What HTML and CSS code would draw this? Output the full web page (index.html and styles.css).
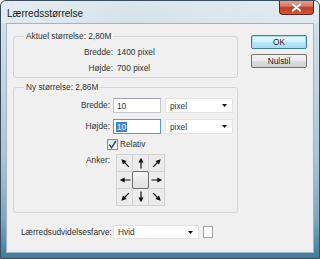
FILE: index.html
```html
<!DOCTYPE html>
<html lang="da">
<head>
  <meta charset="UTF-8" />
  <title>Lærredsstørrelse</title>
  <link rel="stylesheet" href="styles.css">
</head>
<body>

  <div class="window">
    <div class="titlebar">
      <span class="title">Lærredsstørrelse</span>
      <span class="close">
        <svg width="11" height="9" viewBox="0 0 11 9"><path d="M2 1.5L9 7.5M9 1.5L2 7.5" stroke="#fff" stroke-width="2.2" stroke-linecap="round"/></svg>
      </span>
    </div>

    <div class="client">
      <div class="main">
        <div class="groups">
          <fieldset class="group current">
            <legend>Aktuel størrelse: 2,80M</legend>
            <div class="info-row"><span class="lbl">Bredde:</span><span>1400 pixel</span></div>
            <div class="info-row"><span class="lbl">Højde:</span><span>700 pixel</span></div>
          </fieldset>

          <fieldset class="group new">
            <legend>Ny størrelse: 2,86M</legend>
            <div class="field-row">
              <span class="lbl">Bredde:</span>
              <span class="input">10</span>
              <span class="select">pixel <svg class="caret" width="5" height="3" viewBox="0 0 5 3"><path d="M0 0H5L2.5 3Z"/></svg></span>
            </div>
            <div class="field-row">
              <span class="lbl">Højde:</span>
              <span class="input focus"><span class="sel-text">10</span></span>
              <span class="select">pixel <svg class="caret" width="5" height="3" viewBox="0 0 5 3"><path d="M0 0H5L2.5 3Z"/></svg></span>
            </div>
            <div class="check-row">
              <span class="checkbox">
                <svg width="9" height="9" viewBox="0 0 9 9"><path d="M1.3 4.6L3.6 7.6L8 0.8" fill="none" stroke="#2a4a86" stroke-width="1.5"/></svg>
              </span>
              <span>Relativ</span>
            </div>
            <div class="anchor-row">
              <span class="lbl">Anker:</span>
              <div class="anchor-grid">
                <span class="cell"><svg class="arr nw" viewBox="0 0 12 12"><path d="M6 0.8L8.6 5.6H3.4Z"/><path d="M6 5V11.5" class="shaft"/></svg></span>
                <span class="cell"><svg class="arr n" viewBox="0 0 12 12"><path d="M6 0.8L8.6 5.6H3.4Z"/><path d="M6 5V11.5" class="shaft"/></svg></span>
                <span class="cell"><svg class="arr ne" viewBox="0 0 12 12"><path d="M6 0.8L8.6 5.6H3.4Z"/><path d="M6 5V11.5" class="shaft"/></svg></span>
                <span class="cell"><svg class="arr w" viewBox="0 0 12 12"><path d="M6 0.8L8.6 5.6H3.4Z"/><path d="M6 5V11.5" class="shaft"/></svg></span>
                <span class="cell center"></span>
                <span class="cell"><svg class="arr e" viewBox="0 0 12 12"><path d="M6 0.8L8.6 5.6H3.4Z"/><path d="M6 5V11.5" class="shaft"/></svg></span>
                <span class="cell"><svg class="arr sw" viewBox="0 0 12 12"><path d="M6 0.8L8.6 5.6H3.4Z"/><path d="M6 5V11.5" class="shaft"/></svg></span>
                <span class="cell"><svg class="arr s" viewBox="0 0 12 12"><path d="M6 0.8L8.6 5.6H3.4Z"/><path d="M6 5V11.5" class="shaft"/></svg></span>
                <span class="cell"><svg class="arr se" viewBox="0 0 12 12"><path d="M6 0.8L8.6 5.6H3.4Z"/><path d="M6 5V11.5" class="shaft"/></svg></span>
              </div>
            </div>
          </fieldset>
        </div>

        <div class="buttons">
          <span class="btn default">OK</span>
          <span class="btn">Nulstil</span>
        </div>
      </div>

      <div class="ext-row">
        <span class="ext-label">Lærredsudvidelsesfarve:</span>
        <span class="select wide">Hvid <svg class="caret" width="5" height="3" viewBox="0 0 5 3"><path d="M0 0H5L2.5 3Z"/></svg></span>
        <span class="swatch"></span>
      </div>
    </div>
  </div>

</body>
</html>
```

FILE: styles.css
```css
body {
  margin: 0;
  font-family: 'Liberation Sans', Arial, sans-serif;
  font-size: 8.3px;
  color: #333;
  background: #fff;
}

.window {
  width: 320px;
  height: 259px;
  box-sizing: border-box;
  border: 1px solid #3a4d5e;
  border-radius: 6px 6px 0 0;
  background: linear-gradient(to bottom, #d6e3ec 0%, #c6d8e4 25%, #abc5d6 60%, #7ea7c0 85%, #3e7b9c 100%);
  display: flex;
  flex-direction: column;
  overflow: hidden;
}

.titlebar {
  height: 22px;
  display: flex;
  justify-content: space-between;
  align-items: flex-start;
  padding-left: 6px;
  background: linear-gradient(to right, rgba(255,255,255,0.35), rgba(255,255,255,0.1) 40%, rgba(255,255,255,0.3));
}

.title {
  font-size: 10px;
  color: #1a1a1a;
  margin-top: 7px;
}

.close {
  width: 35px;
  height: 15px;
  margin-top: -1px;
  margin-right: 5px;
  box-sizing: border-box;
  border: 1px solid #6b1e12;
  border-top: none;
  border-radius: 0 0 4px 4px;
  background: linear-gradient(to bottom, #e9a796 0%, #d9745e 45%, #c3391f 55%, #d05a3c 100%);
  display: flex;
  align-items: center;
  justify-content: center;
}

.client {
  margin: 0 5px;
  height: 230px;
  box-sizing: border-box;
  border: 1px solid #9fb5c6;
  background: #f0f0f0;
  padding: 7px 6px 0 6px;
}

.main {
  display: flex;
}

.groups {
  width: 225px;
}

.group {
  margin: 0;
  min-width: 0;
  border: 1px solid #d5d5d5;
  border-radius: 3px;
}

.group legend {
  margin-left: 10px;
  padding: 0 2px;
  line-height: 11px;
}

.current {
  padding: 2px 0 1px 0;
}

.new {
  margin-top: 4px;
  padding: 5px 0 6px 0;
}

.info-row {
  display: grid;
  grid-template-columns: 99px auto;
  column-gap: 4px;
  height: 16px;
  align-items: center;
}

.lbl {
  text-align: right;
}

.field-row {
  display: grid;
  grid-template-columns: 96px 48px 69px;
  column-gap: 3px;
  height: 15px;
  align-items: stretch;
}

.field-row + .field-row {
  margin-top: 6px;
}

.field-row .lbl {
  line-height: 15px;
}

.field-row .select {
  margin-left: 1px;
}

.input {
  box-sizing: border-box;
  border: 1px solid #c3c6cc;
  border-top-color: #9ea2aa;
  background: #fff;
  padding-left: 3px;
  display: flex;
  align-items: center;
}

.input.focus {
  border-color: #5b9ad4;
}

.sel-text {
  background: #3a86d8;
  color: #fff;
  padding: 0 1px;
  line-height: 10px;
  margin-left: -1px;
}

.select {
  box-sizing: border-box;
  border: 1px solid #e3e3e3;
  background: #fff;
  padding: 0 5px 0 4px;
  display: flex;
  align-items: center;
  justify-content: space-between;
}

.caret {
  fill: #111;
}

.check-row {
  display: flex;
  align-items: center;
  height: 12px;
  margin-top: 4px;
  padding-left: 93px;
  gap: 2px;
}

.checkbox {
  width: 11px;
  height: 11px;
  box-sizing: border-box;
  border: 1px solid #8c8e91;
  background: linear-gradient(to bottom, #e2e3e5, #fafafa);
  display: flex;
  align-items: center;
  justify-content: center;
}

.anchor-row {
  display: flex;
  margin-top: 4px;
}

.anchor-row .lbl {
  width: 96px;
  margin-top: 1px;
}

.anchor-grid {
  margin-left: 6px;
  display: grid;
  grid-template-columns: repeat(3, 15px);
  grid-template-rows: repeat(3, 16px);
  gap: 1px;
  padding: 1px;
  background: #d2d2d2;
}

.cell {
  background: #ececec;
  display: flex;
  align-items: center;
  justify-content: center;
}

.cell.center {
  border: 1px solid #6e6e6e;
  border-radius: 2px;
  background: linear-gradient(to bottom, #f6f6f6, #dedede);
  margin: -1px;
}

.arr {
  width: 12px;
  height: 12px;
  fill: #111;
}

.arr .shaft {
  stroke: #111;
  stroke-width: 1.2;
  fill: none;
}

.arr.ne { transform: rotate(45deg); }
.arr.e  { transform: rotate(90deg); }
.arr.se { transform: rotate(135deg); }
.arr.s  { transform: rotate(180deg); }
.arr.sw { transform: rotate(225deg); }
.arr.w  { transform: rotate(270deg); }
.arr.nw { transform: rotate(315deg); }

.buttons {
  margin-left: 13px;
  padding-top: 4px;
  display: flex;
  flex-direction: column;
  gap: 5px;
}

.btn {
  width: 56px;
  height: 14px;
  box-sizing: border-box;
  border: 1px solid #707070;
  border-radius: 2px;
  background: linear-gradient(to bottom, #f2f2f2 0%, #ebebeb 48%, #dddddd 52%, #cfcfcf 100%);
  display: flex;
  align-items: center;
  justify-content: center;
  color: #1e1e1e;
}

.btn.default {
  border-color: #3c7fb1;
  box-shadow: inset 0 0 0 1px #a8dcf5;
  background: linear-gradient(to bottom, #eaf6fd 0%, #d9f0fc 48%, #bee6fd 52%, #a7d9f5 100%);
}

.ext-row {
  display: flex;
  align-items: center;
  margin-top: 12px;
}

.ext-label {
  width: 92px;
  padding-left: 8px;
}

.select.wide {
  width: 86px;
  height: 14px;
}

.swatch {
  width: 10px;
  height: 12px;
  box-sizing: border-box;
  margin-left: 4px;
  border: 1px solid #a5a5a5;
  background: #fff;
}
```
